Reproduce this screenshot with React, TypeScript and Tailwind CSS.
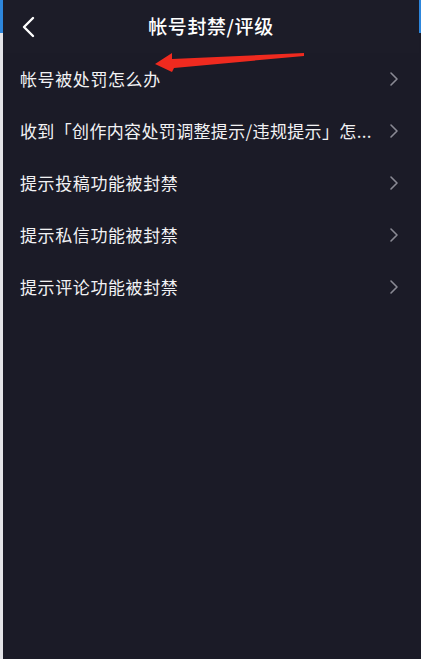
import React from "react";

const rows = [
  "帐号被处罚怎么办",
  "收到「创作内容处罚调整提示/违规提示」怎...",
  "提示投稿功能被封禁",
  "提示私信功能被封禁",
  "提示评论功能被封禁",
];

function Chevron({ className }: { className?: string }) {
  return (
    <svg width="10" height="16" viewBox="0 0 10 16" className={className} fill="none">
      <path d="M2 2 L8 8 L2 14" stroke="currentColor" strokeWidth="1.6" strokeLinecap="round" strokeLinejoin="round" />
    </svg>
  );
}

export default function App() {
  return (
    <div
      className="relative flex h-[659px] w-[421px] overflow-hidden bg-[#1b1b27]"
      style={{ fontFamily: '"Noto Sans CJK SC", "Noto Sans", sans-serif' }}
    >
      <div className="flex w-[3px] shrink-0 flex-col bg-[#e4e4e8]">
        <div className="h-[33px] bg-[#2d86dc]" />
      </div>
      <div className="flex min-w-0 flex-1 flex-col">
        <div className="relative flex h-[53px] items-center justify-center bg-[#1c1c28]">
          <svg
            width="14"
            height="22"
            viewBox="0 0 14 22"
            className="absolute left-[18px] top-[16px] text-white"
            fill="none"
          >
            <path d="M12 2 L3 11 L12 20" stroke="currentColor" strokeWidth="2.4" strokeLinecap="round" strokeLinejoin="round" />
          </svg>
          <span className="text-[19px] font-medium tracking-[0.6px] text-white">帐号封禁/评级</span>
        </div>
        <div className="flex flex-col">
          {rows.map((r, i) => (
            <div key={r} className="flex h-[52px] items-center gap-[4px] pl-[17px] pr-[20px]">
              <span
                className={`min-w-0 flex-1 whitespace-nowrap text-[17px] text-[#f2f2f4] ${
                  i === 1 ? "tracking-[0.35px]" : "tracking-[0.6px]"
                }`}
              >
                {r}
              </span>
              <Chevron className="shrink-0 text-[#8a8a94]" />
            </div>
          ))}
        </div>
      </div>
      <div className="flex w-[2px] shrink-0 flex-col bg-[#1b1b27]">
        <div className="h-[33px] bg-[#2d86dc]" />
      </div>
      <svg
        className="pointer-events-none absolute left-0 top-0"
        width="421"
        height="659"
        viewBox="0 0 421 659"
      >
        <path
          d="M155 64 L172 53 L172 59 L304 53 L304 56 L174 68 L172 72 Z"
          fill="#ef2a1f"
        />
      </svg>
    </div>
  );
}
